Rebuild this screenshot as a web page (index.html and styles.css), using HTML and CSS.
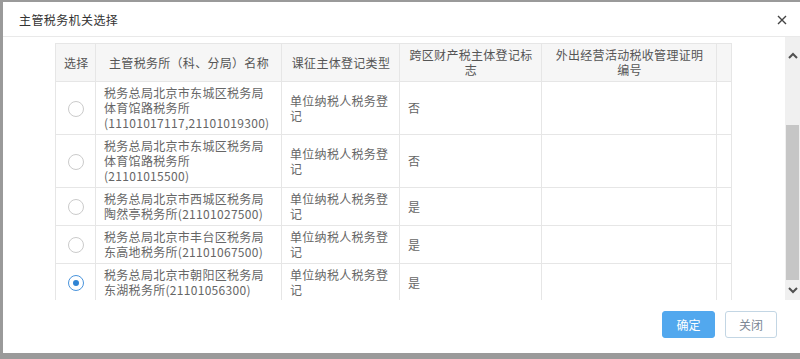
FILE: index.html
```html
<!DOCTYPE html>
<html lang="zh-CN">
  <head>
    <meta charset="UTF-8">
    <title>主管税务机关选择</title>
    <link rel="stylesheet" href="styles.css">
  </head>
  <body>
    <div class="modal">
      <div class="modal-header">
        <span class="modal-title">主管税务机关选择</span>
        <span class="close">
          <svg width="10" height="10" viewBox="0 0 10 10"><path d="M1 1L9 9M9 1L1 9" stroke="#444" stroke-width="1.4"/></svg>
        </span>
      </div>
      <div class="modal-body">
        <div class="table-wrap">
          <table class="grid">
            <colgroup>
              <col style="width:40px">
              <col style="width:186px">
              <col style="width:118px">
              <col style="width:142px">
              <col style="width:175px">
              <col style="width:15px">
            </colgroup>
            <thead>
              <tr>
                <th>选择</th>
                <th>主管税务所（科、分局）名称</th>
                <th>课征主体登记类型</th>
                <th>跨区财产税主体登记标<br>志</th>
                <th>外出经营活动税收管理证明<br>编号</th>
                <th></th>
              </tr>
            </thead>
            <tbody>
              <tr>
                <td class="pick"><span class="radio"></span></td>
                <td>税务总局北京市东城区税务局<br>体育馆路税务所<br>(11101017117,21101019300)</td>
                <td>单位纳税人税务登<br>记</td>
                <td>否</td>
                <td></td>
                <td></td>
              </tr>
              <tr>
                <td class="pick"><span class="radio"></span></td>
                <td>税务总局北京市东城区税务局<br>体育馆路税务所<br>(21101015500)</td>
                <td>单位纳税人税务登<br>记</td>
                <td>否</td>
                <td></td>
                <td></td>
              </tr>
              <tr>
                <td class="pick"><span class="radio"></span></td>
                <td>税务总局北京市西城区税务局<br>陶然亭税务所(21101027500)</td>
                <td>单位纳税人税务登<br>记</td>
                <td>是</td>
                <td></td>
                <td></td>
              </tr>
              <tr>
                <td class="pick"><span class="radio"></span></td>
                <td>税务总局北京市丰台区税务局<br>东高地税务所(21101067500)</td>
                <td>单位纳税人税务登<br>记</td>
                <td>是</td>
                <td></td>
                <td></td>
              </tr>
              <tr>
                <td class="pick"><span class="radio checked"></span></td>
                <td>税务总局北京市朝阳区税务局<br>东湖税务所(21101056300)</td>
                <td>单位纳税人税务登<br>记</td>
                <td>是</td>
                <td></td>
                <td></td>
              </tr>
            </tbody>
          </table>
        </div>
        <div class="scrollbar">
          <div class="arrow up">
            <svg width="10" height="7" viewBox="0 0 10 7"><path d="M1 6L5 2L9 6" fill="none" stroke="#505050" stroke-width="2"/></svg>
          </div>
          <div class="track"><div class="thumb"></div></div>
          <div class="arrow down">
            <svg width="10" height="7" viewBox="0 0 10 7"><path d="M1 1L5 5L9 1" fill="none" stroke="#505050" stroke-width="2"/></svg>
          </div>
        </div>
      </div>
      <div class="modal-footer">
        <button class="btn btn-primary">确定</button>
        <button class="btn btn-default">关闭</button>
      </div>
    </div>
  </body>
</html>
```

FILE: styles.css
```css
body {
	margin: 0;
	background: #9a9a9a;
	font-family: "Noto Sans CJK SC", "Noto Sans", sans-serif;
	font-size: 12px;
	color: #666;
	overflow: hidden;
}
.modal {
	margin: 2px 0 0 3px;
	height: 351px;
	background: #fff;
	display: flex;
	flex-direction: column;
}
.modal-header {
	height: 34px;
	border-bottom: 1px solid #e9e9e9;
	display: flex;
	align-items: center;
	justify-content: space-between;
	padding: 0 13px 0 16px;
}
.modal-title {
	font-size: 12px;
	letter-spacing: 0.4px;
	color: #333;
}
.close {
	display: flex;
	margin-top: 2px;
}
.modal-body {
	display: flex;
	height: 263px;
}
.table-wrap {
	flex: 1;
	padding: 6px 0 0 52px;
	overflow: hidden;
}
.grid {
	width: 676px;
	table-layout: fixed;
	border-collapse: collapse;
	border: 1px solid #e6e6e6;
	letter-spacing: 0.3px;
}
.grid th, .grid td {
	border: 1px solid #e6e6e6;
	padding: 3px 7px 4px 8px;
	line-height: 15px;
	font-weight: normal;
	white-space: nowrap;
	overflow: hidden;
}
.grid th {
	background: #f6f6f6;
	color: #555;
	text-align: center;
	height: 30px;
}
.grid td {
	text-align: left;
	vertical-align: middle;
}
.grid td.pick {
	text-align: center;
	padding: 0;
}
.radio {
	display: inline-block;
	vertical-align: middle;
	width: 14px;
	height: 14px;
	border: 1px solid #cbcbcb;
	border-radius: 50%;
	position: relative;
}
.radio.checked {
	border-color: #4a94dc;
}
.radio.checked::after {
	content: "";
	position: absolute;
	left: 4px;
	top: 4px;
	width: 6px;
	height: 6px;
	border-radius: 50%;
	background: #2f84d4;
}
.scrollbar {
	width: 15px;
	background: #f0f0f0;
	display: flex;
	flex-direction: column;
}
.arrow {
	height: 36px;
	display: flex;
	justify-content: center;
	align-items: center;
}
.arrow.down {
	height: 20px;
}
.track {
	flex: 1;
	display: flex;
	flex-direction: column;
	justify-content: flex-end;
}
.thumb {
	height: 155px;
	margin: 0 1px;
	background: #c6c6c6;
}
.modal-footer {
	flex: 1;
	display: flex;
	justify-content: flex-end;
	align-items: flex-start;
	gap: 10px;
	padding: 11px 23px 0 0;
}
.btn {
	height: 27px;
	border-radius: 3px;
	font-family: inherit;
	font-size: 12px;
	padding: 0;
}
.btn-primary {
	width: 53px;
	background: #52a8ee;
	border: 1px solid #52a8ee;
	color: #fff;
}
.btn-default {
	width: 52px;
	background: #fff;
	border: 1px solid #c3d6e4;
	color: #7b8794;
}
```
